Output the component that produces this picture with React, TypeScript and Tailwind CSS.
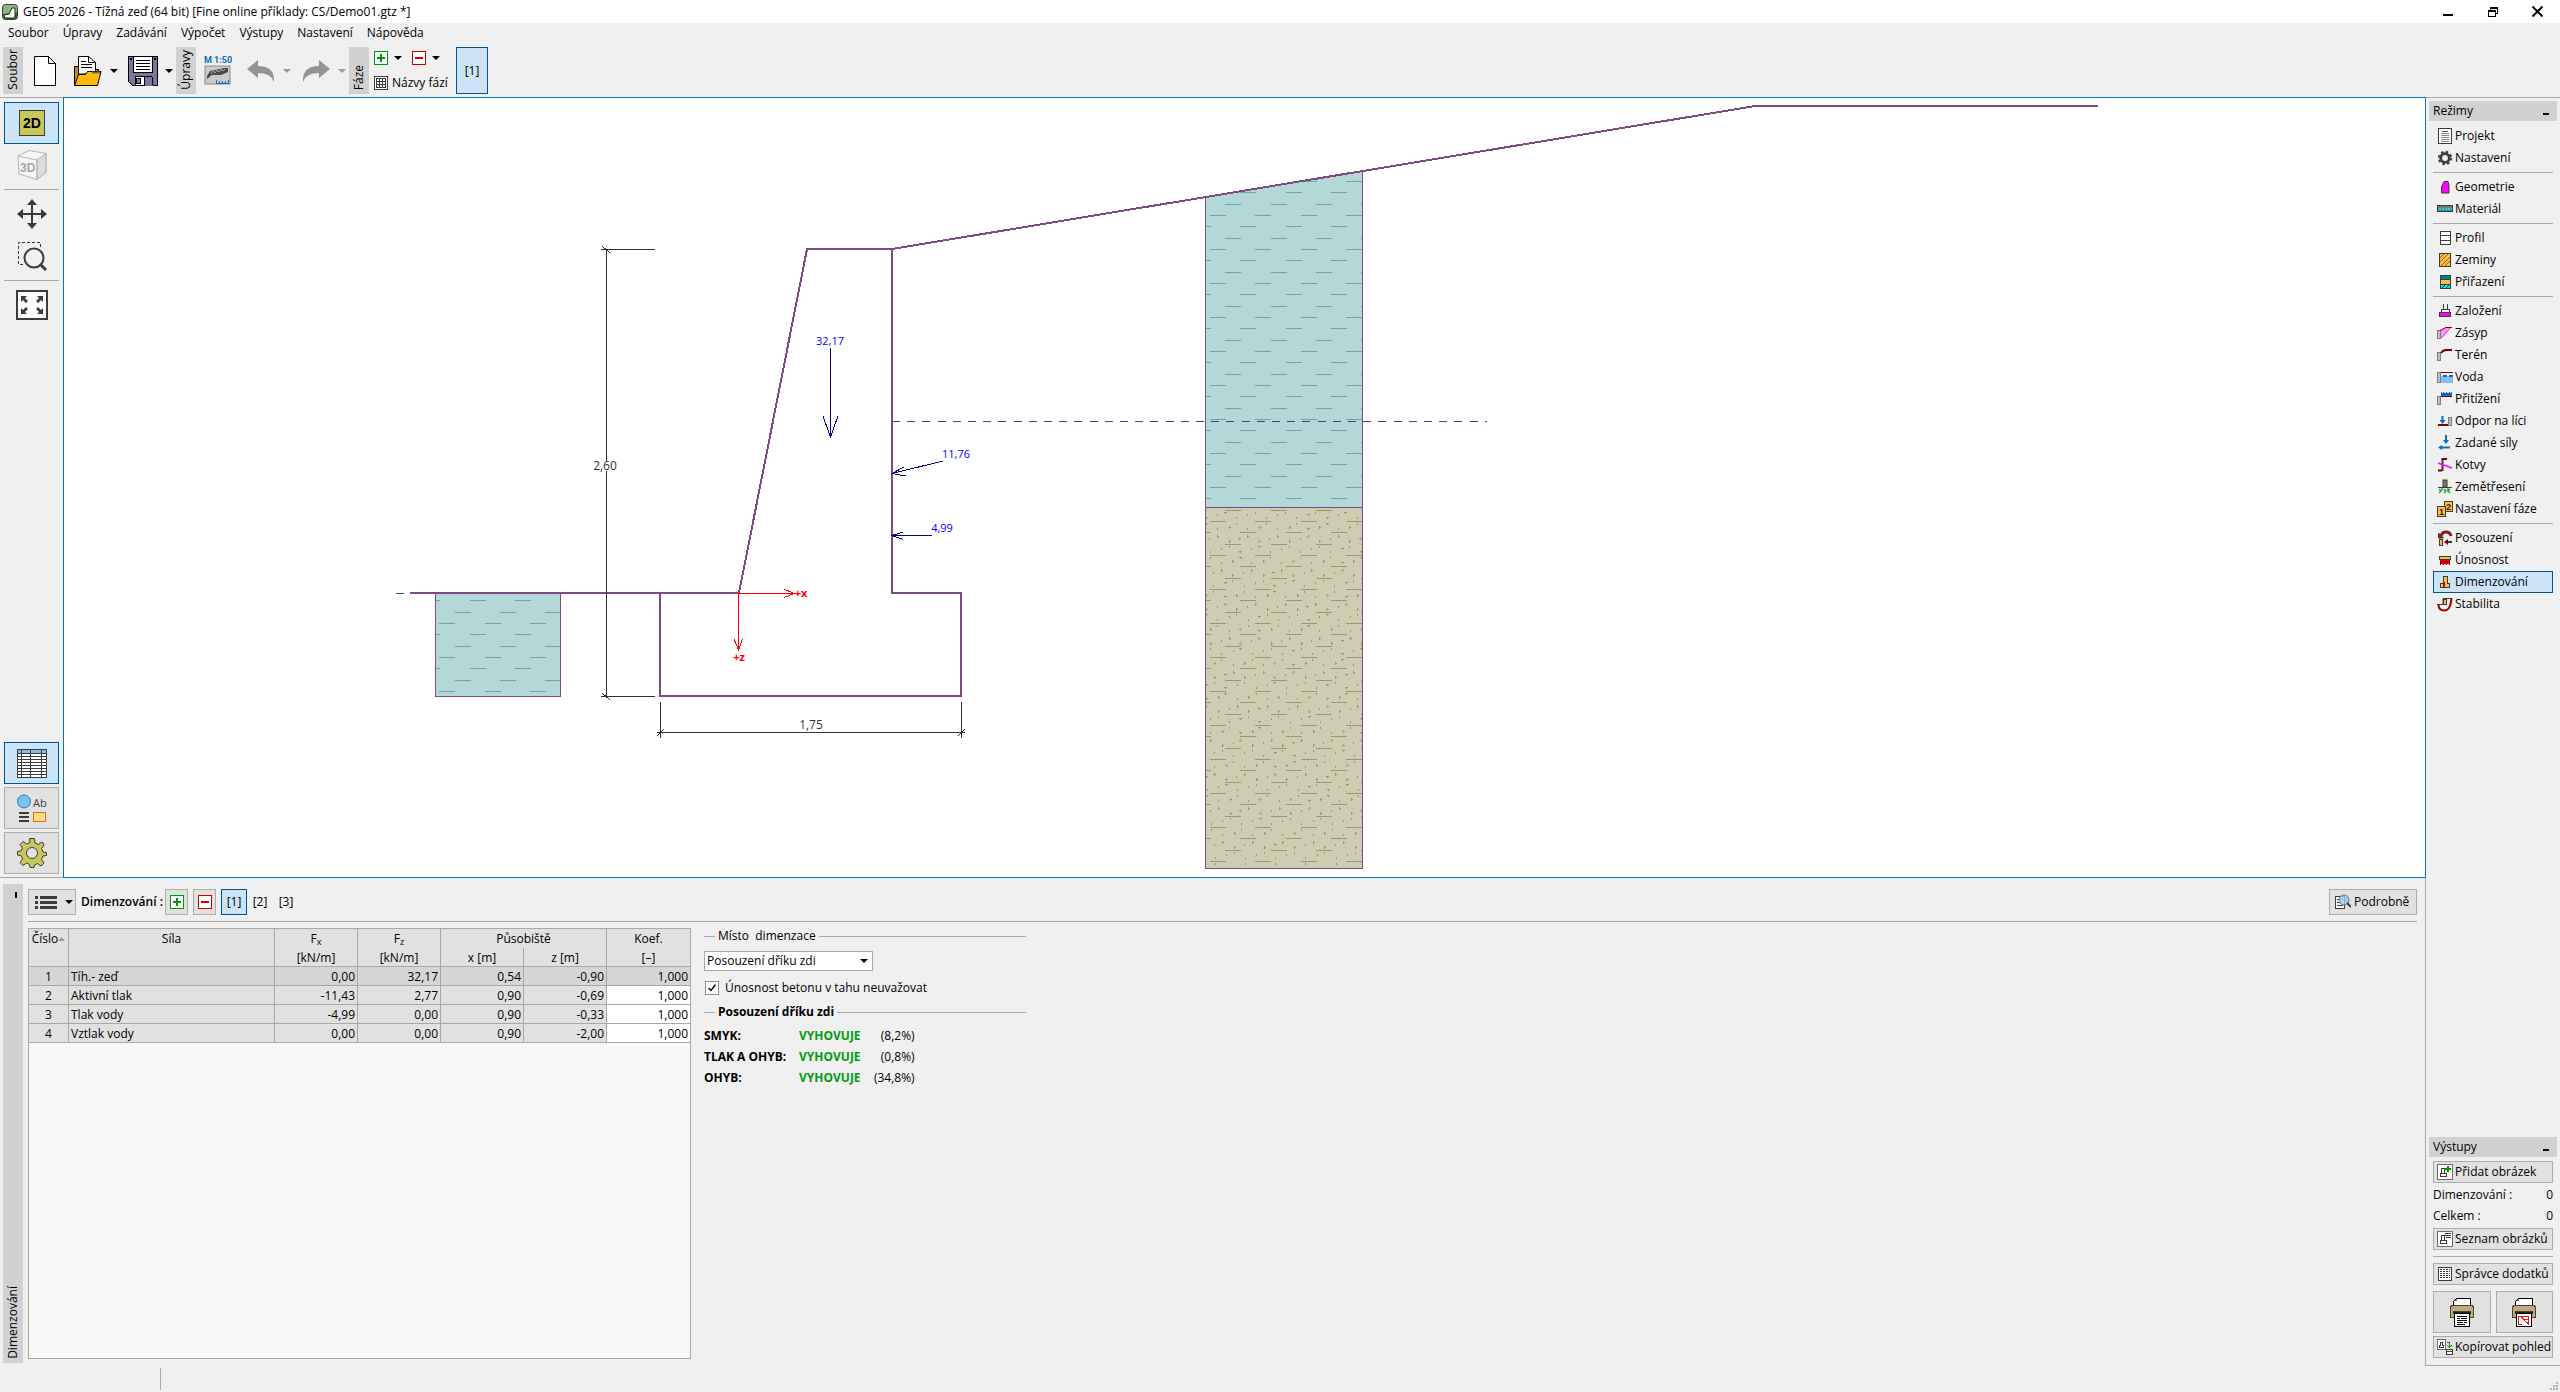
import type { ReactNode } from "react";

const BTN = "flex items-center border border-[#adadad] bg-[#e1e1e1]";
const SELECTED = "border border-[#005499] bg-[#cce4f7]";
const INK = "#3c3c3c";

function Svg({ w = 16, h = 16, children, smooth = false }: { w?: number; h?: number; children: ReactNode; smooth?: boolean }) {
  return (
    <svg
      width={w}
      height={h}
      viewBox={`0 0 ${w} ${h}`}
      fill="none"
      className="shrink-0"
      shapeRendering={smooth ? "auto" : "crispEdges"}
      aria-hidden="true"
    >
      {children}
    </svg>
  );
}

function Caret({ color = "#000" }: { color?: string }) {
  return (
    <Svg w={8} h={4} smooth>
      <path d="M0 0h8L4 4z" fill={color} />
    </Svg>
  );
}

function PlusIcon() {
  return (
    <Svg w={14} h={14}>
      <rect x="0.5" y="0.5" width="13" height="13" rx="1" fill="#fff" stroke="#00960a" />
      <path d="M6 3h2v3h3v2H8v3H6V8H3V6h3z" fill="#00960a" />
    </Svg>
  );
}

function MinusIcon() {
  return (
    <Svg w={14} h={14}>
      <rect x="0.5" y="0.5" width="13" height="13" rx="1" fill="#fff" stroke="#c80000" />
      <path d="M3 6h8v2H3z" fill="#c80000" />
    </Svg>
  );
}

/* ---------- title bar and menu ---------- */

function TitleBar() {
  return (
    <header className="flex h-[23px] shrink-0 items-center bg-white pl-0.5">
      <Svg smooth>
        <rect x="0.5" y="0.5" width="15" height="15" rx="3" fill="#3d6b35" stroke="#2c4a28" />
        <path d="M1 4q0-3 3-3h8q3 0 3 3v4L1 10z" fill="#8fb386" />
        <path d="M2 11l5-1 3-6h3v8q0 2-2 2H4q-2 0-2-3z" fill="#fff" stroke="#1d2b1b" />
      </Svg>
      <h1 className="ml-[5px] grow">GEO5 2026 - Tížná zeď (64 bit) [Fine online příklady: CS/Demo01.gtz *]</h1>
      <button type="button" aria-label="Minimalizovat" className="flex h-full w-[45px] items-center justify-center">
        <Svg w={10} h={10}>
          <path d="M0 7h10v2H0z" fill="#000" />
        </Svg>
      </button>
      <button type="button" aria-label="Obnovit" className="flex h-full w-[45px] items-center justify-center">
        <Svg w={10} h={10}>
          <path d="M2 0h8v2H2zM0 3h8v2H0zM2 0h1v3H2zM9 0h1v7H9zM8 6h2v1H8z" fill="#000" />
          <path d="M0.5 4.5h7v5h-7z" stroke="#000" />
        </Svg>
      </button>
      <button type="button" aria-label="Zavřít" className="flex h-full w-[45px] items-center justify-center">
        <Svg w={11} h={11} smooth>
          <path d="M0.5 0.5l10 10M10.5 0.5l-10 10" stroke="#000" strokeWidth="2" />
        </Svg>
      </button>
    </header>
  );
}

const MENU = ["Soubor", "Úpravy", "Zadávání", "Výpočet", "Výstupy", "Nastavení", "Nápověda"];

function MenuBar() {
  return (
    <nav className="flex h-5 shrink-0 items-center gap-3.5 pl-2">
      {MENU.map((m) => (
        <button key={m} type="button">
          {m}
        </button>
      ))}
    </nav>
  );
}

/* ---------- main toolbar ---------- */

function SideLabel({ children }: { children: ReactNode }) {
  return (
    <div className="flex w-5 shrink-0 items-end justify-center bg-[#d1d1d1] pb-1">
      <span className="rotate-180 leading-4 [writing-mode:vertical-rl]">{children}</span>
    </div>
  );
}

function ToolButton({ label, children }: { label: string; children: ReactNode }) {
  return (
    <button type="button" aria-label={label} className="flex w-[38px] items-center justify-center">
      {children}
    </button>
  );
}

function ArrowButton({ label, color }: { label: string; color?: string }) {
  return (
    <button type="button" aria-label={label} className="flex w-3.5 items-center justify-center">
      <Caret color={color} />
    </button>
  );
}

function GridIcon() {
  return (
    <Svg w={14} h={14}>
      <rect x="0.5" y="0.5" width="13" height="13" fill="#fff" stroke={INK} />
      <rect x="2.5" y="2.5" width="9" height="9" stroke={INK} />
      <path d="M3 5.5h8M3 8.5h8M5.5 3v8M8.5 3v8" stroke={INK} />
    </Svg>
  );
}

function Toolbar() {
  return (
    <div className="flex h-[54px] shrink-0 items-stretch pt-1 pb-[3px] pl-[3px]">
      <SideLabel>Soubor</SideLabel>
      <div className="ml-[3px] flex">
        <ToolButton label="Nový">
          <Svg w={22} h={30} smooth>
            <path d="M0.5 0.5h14l7 7v22h-21z" fill="#fff" stroke="#000" />
            <path d="M14.5 0.5v7h7" stroke="#000" />
          </Svg>
        </ToolButton>
      </div>
      <div className="ml-[5px] flex">
        <ToolButton label="Otevřít">
          <Svg w={28} h={30} smooth>
            <path d="M0.5 29V10.5h6l2 3h16v5" fill="#d18b00" stroke="#000" />
            <path d="M4.5 18V0.5h10l7 6V18z" fill="#fff" stroke="#000" />
            <path d="M14.5 0.5v6h7" stroke="#000" />
            <path d="M7 5.5h5M7 8.5h11M7 11.5h11" stroke="#000" />
            <path d="M0.5 29.5l4-11h7l2-3h13.5l-3.5 14z" fill="#ffb90a" stroke="#000" />
            <path d="M18 16.5h8" stroke="#667" strokeWidth="2" />
          </Svg>
        </ToolButton>
        <ArrowButton label="Otevřít nedávné" />
      </div>
      <div className="ml-[3px] flex">
        <ToolButton label="Uložit">
          <Svg w={30} h={30}>
            <path d="M0.5 0.5h29v29H4.5l-4-4z" fill="#7b7799" stroke="#000" />
            <rect x="5.5" y="0.5" width="19" height="16" fill="#fff" stroke="#000" />
            <path d="M8 4.5h14M8 7.5h14M8 10.5h14M8 13.5h14" stroke="#000" />
            <path d="M2 2h2v2H2zM26 2h2v2h-2z" fill="#000" />
            <rect x="7.5" y="20.5" width="16" height="9" fill="#fff" stroke="#000" />
            <rect x="8.5" y="22.5" width="4" height="5" fill="#7b7799" stroke="#000" />
            <path d="M17 21h8v9h-8z" fill="#7b7799" />
            <path d="M24.5 21v8M16.5 21v8" stroke="#000" />
          </Svg>
        </ToolButton>
        <ArrowButton label="Uložit jako" />
      </div>
      <SideLabel>Úpravy</SideLabel>
      <div className="mx-[3px] flex">
        <ToolButton label="Měřítko">
          <Svg w={28} h={29} smooth>
            <text x="0" y="7" fontSize="9" fontWeight="700" fill="#0a6ebe" fontFamily="Roboto, sans-serif">
              M 1:50
            </text>
            <rect x="1" y="10" width="25" height="18" fill="#cbcbcb" stroke="#8a8a8a" />
            <path d="M3 20l3-5 14-3h4v4l-7 3H8l-5 4z" fill="#4c4c4c" />
            <path d="M7 18l2-3 2 2 2-3 2 2 2-3 2 2 2-2" stroke="#a8a8a8" />
            <path d="M12.5 24v3.5h12V24M15.5 25v2M18.500 25v2M21.500 25v2" stroke="#0a6ebe" />
          </Svg>
        </ToolButton>
      </div>
      <div className="ml-0.5 flex">
        <ToolButton label="Zpět">
          <Svg w={28} h={22} smooth>
            <path d="M0 9L11 0v6q17 0 16 16q-3-9-16-9v5z" fill="#949494" />
          </Svg>
        </ToolButton>
        <ArrowButton label="Historie zpět" color="#999" />
      </div>
      <div className="ml-[3px] flex">
        <ToolButton label="Znovu">
          <Svg w={28} h={22} smooth>
            <path d="M28 9L17 0v6q-17 0-16 16q3-9 16-9v5z" fill="#949494" />
          </Svg>
        </ToolButton>
        <ArrowButton label="Historie znovu" color="#999" />
      </div>
      <SideLabel>Fáze</SideLabel>
      <div className="ml-[5px] flex w-[82px] flex-col justify-between py-1">
        <div className="flex items-center">
          <button type="button" aria-label="Přidat fázi">
            <PlusIcon />
          </button>
          <button type="button" aria-label="Přidat fázi – možnosti" className="ml-1.5">
            <Caret />
          </button>
          <button type="button" aria-label="Odebrat fázi" className="ml-2.5">
            <MinusIcon />
          </button>
          <button type="button" aria-label="Odebrat fázi – možnosti" className="ml-1.5">
            <Caret />
          </button>
        </div>
        <button type="button" className="flex h-3.5 items-center gap-1 whitespace-nowrap">
          <GridIcon />
          Názvy fází
        </button>
      </div>
      <button type="button" className={`w-8 ${SELECTED}`}>
        [1]
      </button>
    </div>
  );
}

/* ---------- left view bar ---------- */

function ViewButton({ label, look = "plain", children }: { label: string; look?: "plain" | "raised" | "selected"; children: ReactNode }) {
  const style = look === "selected" ? SELECTED : look === "raised" ? "border border-[#adadad] bg-[#e1e1e1]" : "";
  return (
    <button type="button" aria-label={label} className={`flex h-[42px] w-full shrink-0 items-center justify-center ${style}`}>
      {children}
    </button>
  );
}

function ViewBar() {
  return (
    <aside className="flex w-[63px] shrink-0 flex-col border-y border-[#a8a8a8] px-1 pt-1 pb-[3px]">
      <ViewButton label="2D" look="selected">
        <Svg w={26} h={26}>
          <rect x="0.5" y="0.5" width="25" height="25" fill="#c8c85a" stroke={INK} />
          <text x="13" y="18" fontSize="14" fontWeight="700" textAnchor="middle" fill="#000" fontFamily="Liberation Sans, sans-serif">
            2D
          </text>
        </Svg>
      </ViewButton>
      <ViewButton label="3D">
        <Svg w={30} h={30} smooth>
          <path d="M1 6L12 0.5l17 3v19L20 29.5 2 24z" fill="#f6f6f6" stroke="#b4b4b4" />
          <path d="M20 10l9-6.5v19l-9 7z" fill="#dcdcdc" stroke="#b4b4b4" />
          <path d="M1 6l19 4v19" stroke="#b4b4b4" />
          <text x="3" y="22" fontSize="12" fontWeight="700" fill="#a4a4a4" fontFamily="Liberation Sans, sans-serif">
            3D
          </text>
        </Svg>
      </ViewButton>
      <hr className="my-[3px] border-[#a8a8a8]" />
      <ViewButton label="Posun">
        <Svg w={30} h={30} smooth>
          <path d="M15 4v22M4 15h22" stroke={INK} strokeWidth="2" />
          <path d="M15 0l5 6H10zM15 30l5-6H10zM0 15l6-5v10zM30 15l-6-5v10z" fill={INK} />
        </Svg>
      </ViewButton>
      <ViewButton label="Výřez">
        <Svg w={30} h={30} smooth>
          <path d="M6 23.5H1.5v-22h22V7" stroke={INK} strokeDasharray="3 2" />
          <circle cx="17" cy="17" r="9.5" stroke={INK} strokeWidth="2" />
          <path d="M23 23l6 6" stroke={INK} strokeWidth="3" />
        </Svg>
      </ViewButton>
      <hr className="my-[3px] border-[#a8a8a8]" />
      <ViewButton label="Zobrazit vše">
        <Svg w={32} h={30} smooth>
          <rect x="1" y="1" width="30" height="28" stroke={INK} strokeWidth="2" fill="#fafafa" />
          <path d="M5 12V6h6L9 8l3 3-2 2-3-3zM27 12V6h-6l2 2-3 3 2 2 3-3zM5 18v6h6l-2-2 3-3-2-2-3 3zM27 18v6h-6l2-2-3-3 2-2 3 3z" fill={INK} />
        </Svg>
      </ViewButton>
      <div className="mt-auto flex flex-col gap-[3px]">
        <ViewButton label="Tabulka" look="selected">
          <Svg w={30} h={29}>
            <rect x="0.5" y="0.5" width="29" height="28" fill="#fff" stroke={INK} />
            <path d="M1 1h28v3H1z" fill="#7fbfee" />
            <path d="M0 4.5h30M0 7.5h30M0 10.5h30M0 13.5h30M0 16.5h30M0 19.5h30M0 22.5h30M0 25.5h30M4.5 0v29M13.5 0v29M24.5 0v29" stroke={INK} />
          </Svg>
        </ViewButton>
        <ViewButton label="Kreslení" look="raised">
          <Svg w={30} h={29} smooth>
            <circle cx="7" cy="7.5" r="6.5" fill="#7fbfee" stroke="#1f7cc4" />
            <text x="16" y="13" fontSize="11" fill={INK} fontFamily="Open Sans, sans-serif">
              Ab
            </text>
            <path d="M2 19h10M2 23h10M2 27h10" stroke={INK} strokeWidth="2" />
            <rect x="16.5" y="18.5" width="12" height="9" fill="#fadc8c" stroke="#e07000" />
          </Svg>
        </ViewButton>
        <ViewButton label="Nastavení zobrazení" look="raised">
          <Svg w={30} h={30} smooth>
            <path
              d="M12.5 0.5h5l.5 4.500 3.500 1.500 3.500-2.500 2 2 -.5 2-2 2.500 1.500 3.500 3.500 .5v3l-3.500 .5-1.500 3.500 2.500 3.500-3 3-3.500-2.500-3 1.500-.5 2.500h-4l-.5-3-3-1.500-3.500 2.500-3-3 2.500-3.500-1.500-3.500-3.500-.5v-3.500l3.500-.5 1.500-3-2.500-3.500 3-3 3.500 2.500 3.500-1.500z"
              fill="#c8c85a"
              stroke={INK}
              strokeLinejoin="round"
            />
            <circle cx="15" cy="15" r="5.5" fill="#e1e1e1" stroke={INK} />
          </Svg>
        </ViewButton>
      </div>
    </aside>
  );
}

/* ---------- drawing ---------- */

const OUTLINE = "#7f4a7f";

/** Rows of short clay dashes, every row shifted against the one above. */
function clayPath(x1: number, x2: number, y1: number, y2: number) {
  const step = 34 / 3;
  const period = 136 / 3;
  const shift = [30, 15, 0];
  let d = "";
  for (let j = Math.ceil((y1 - 215) / step); 215 + j * step < y2; j++) {
    const y = Math.round(215 + j * step) + 0.5;
    const off = 1180 + shift[((j % 3) + 3) % 3];
    for (let k = Math.floor((x1 - 16 - off) / period); off + k * period < x2; k++) {
      const a = Math.max(x1, Math.round(off + k * period));
      const b = Math.min(x2, Math.round(off + k * period) + 16);
      if (b > a) d += `M${a} ${y}H${b}`;
    }
  }
  return d;
}

const GRAINS: [number, number, "v" | "r"][] = [
  [0, 0, "v"],
  [57, 9, "v"],
  [57, 27, "v"],
  [35, 35, "r"],
  [0, 42, "v"],
  [0, 62, "r"],
  [67, 70, "v"],
  [35, 77, "r"],
  [35, 96, "v"],
];
const WIDE = [49, 106, 151, 209, 253, 310, 355, 412, 457, 469, 514];

/** Sand grains between the dashes; the lattice drifts sideways from band to band. */
function sandPath() {
  const period = 90.67;
  let d = "";
  for (let k = -1; k < 12; k++) {
    for (const [gx, gy, kind] of GRAINS) {
      const y = 490 + Math.floor((77 + 102 * k + gy) / 3);
      if (y < 508 || y > 865) continue;
      let start = (82 + 11.8 * k + gx) % period;
      if (start < 47) start += period;
      for (let gridX = start; gridX < 516; gridX += period) {
        const x = 1190 + Math.floor(gridX / 3);
        const wide = WIDE.some((w) => Math.abs(w - gridX) < 3);
        if (kind === "r" && wide) d += `M${x} ${y - 1}h1v1h-1zM${x} ${y + 1}h1v1h-1zM${x - 1} ${y}h1v1h-1zM${x + 1} ${y}h1v1h-1z`;
        else if (kind === "r") d += `M${x} ${y - 1}h1v3h-1zM${x + 1} ${y}h1v1h-1z`;
        else if (wide) d += `M${x - 1} ${y - 1}h3v1h-3zM${x} ${y}h1v1h-1z`;
        else d += `M${x} ${y - 1}h1v2h-1z`;
      }
    }
  }
  return d;
}

function Drawing() {
  return (
    <svg
      viewBox="64 98 2361 779"
      preserveAspectRatio="xMidYMid meet"
      className="block h-full w-full"
      fill="none"
      fontFamily="Open Sans, sans-serif"
      fontSize="12"
      role="img"
      aria-label="Řez tížnou zdí se silami"
    >
      <defs>
        <clipPath id="upper-soil">
          <path d="M1205 197L1363 171V507H1205z" />
        </clipPath>
      </defs>
      <g shapeRendering="crispEdges">
        <rect x="435" y="593" width="126" height="103" fill="#b4d7d7" />
        <path d={clayPath(436, 560, 597, 696)} stroke="#64aaaa" />
        <path d="M435.5 593V696.5H560.5V593" stroke={OUTLINE} />
        <path d="M1205 197L1363 171V507H1205z" fill="#b4d7d7" />
        <path d={clayPath(1206, 1362, 170, 507)} stroke="#64aaaa" clipPath="url(#upper-soil)" />
        <rect x="1205" y="507" width="158" height="362" fill="#cdcdb4" />
        <path d={clayPath(1206, 1362, 508, 868)} stroke="#9b9b5f" />
        <path d={sandPath()} fill="#9b9b5f" />
        <path d="M1205.5 197V868.5H1362.5V171M1205 507.5H1363" stroke={OUTLINE} />
        <path d="M892 421.5H1487" stroke="#3c3c9b" strokeDasharray="8 7.2" />
        <path d="M396 593.5H404" stroke="#3c3c9b" />
        <path d="M410 593H739L807 249H892V593H961V696H660V593" stroke={OUTLINE} strokeWidth="2" />
        <path d="M892 249L1755 106H2098" stroke={OUTLINE} strokeWidth="2" />

        <path d="M601 249.5H655M601 696.5H655M606.5 249V461M606.5 471V696" stroke="#323232" />
        <path d="M602 246l8 7M602 693l8 7" stroke="#323232" />
        <path d="M660.5 702V738M961.5 702V738M657 732.5H965" stroke="#323232" />
        <path d="M657 736l7-7M958 736l7-7" stroke="#323232" />

        <path d="M830.5 348V437M823 416l7.5 21 7.5-21" stroke="#000082" />
        <path d="M943 461L892 473.5M904 467l-12 6.5 14 2.5" stroke="#000082" />
        <path d="M932 535.5H892M903 532l-11 3.5 11 4" stroke="#000082" />

        <path d="M738.5 593V650M734 639l4.5 11 4-11M738 593.5H798M784 589l10 4.500-10 4" stroke="#f00" />
      </g>
      <g textAnchor="middle">
        <text x="605" y="470" fill="#323232">2,60</text>
        <text x="811" y="729" fill="#323232">1,75</text>
        <g fill="#00f" fontSize="11">
          <text x="830" y="345">32,17</text>
          <text x="956" y="458">11,76</text>
          <text x="942" y="532">4,99</text>
        </g>
        <g fill="#f00" fontSize="11" fontWeight="700">
          <text x="801" y="597">+x</text>
          <text x="739" y="661">+z</text>
        </g>
      </g>
    </svg>
  );
}

/* ---------- bottom panel ---------- */

const FORCES = [
  ["Tíh.- zeď", "0,00", "32,17", "0,54", "-0,90", "1,000"],
  ["Aktivní tlak", "-11,43", "2,77", "0,90", "-0,69", "1,000"],
  ["Tlak vody", "-4,99", "0,00", "0,90", "-0,33", "1,000"],
  ["Vztlak vody", "0,00", "0,00", "0,90", "-2,00", "1,000"],
];

const LINE = "border-[#a8a8a8]";
const TH = "h-[19px] p-0 text-center align-middle font-normal leading-4";
const TD = "h-[19px] border-b border-[#a8a8a8] p-0 pt-0.5";

function ForceTable() {
  return (
    <div className={`w-[663px] border bg-[#f8f8f8] ${LINE}`}>
      <table className="w-full table-fixed border-separate border-spacing-0 leading-4">
        <colgroup>
          <col className="w-10" />
          <col className="w-[206px]" />
          <col />
          <col />
          <col />
          <col />
          <col />
        </colgroup>
        <thead className="bg-[#e1e1e1]">
          <tr>
            <th rowSpan={2} className={`border-r border-b p-0 pt-0.5 align-top font-normal ${LINE}`}>
              <span className="flex items-center justify-center">
                Číslo
                <Svg w={7} h={4} smooth>
                  <path d="M0 4l3.5-4L7 4z" fill="#999" />
                </Svg>
              </span>
            </th>
            <th rowSpan={2} className={`border-r border-b p-0 pt-0.5 align-top font-normal ${LINE}`}>
              Síla
            </th>
            <th className={`${TH} border-r ${LINE}`}>
              F<sub className="text-[9px] leading-none">x</sub>
            </th>
            <th className={`${TH} border-r ${LINE}`}>
              F<sub className="text-[9px] leading-none">z</sub>
            </th>
            <th colSpan={2} className={`${TH} border-r ${LINE}`}>
              Působiště
            </th>
            <th className={TH}>Koef.</th>
          </tr>
          <tr>
            {["[kN/m]", "[kN/m]", "x [m]", "z [m]"].map((t, i) => (
              <th key={i} className={`${TH} border-r border-b pt-0.5 ${LINE}`}>
                {t}
              </th>
            ))}
            <th className={`${TH} border-b pt-0.5 ${LINE}`}>[–]</th>
          </tr>
        </thead>
        <tbody>
          {FORCES.map(([name, ...nums], r) => (
            <tr key={name} className={r === 0 ? "bg-[#d6d6d6]" : "bg-[#e1e1e1]"}>
              <td className={`${TD} border-r text-center`}>{r + 1}</td>
              <td className={`${TD} border-r pl-0.5`}>{name}</td>
              {nums.slice(0, 4).map((n, i) => (
                <td key={i} className={`${TD} border-r pr-0.5 text-right`}>
                  {n}
                </td>
              ))}
              {r === 0 ? (
                <td className={`${TD} pr-0.5 text-right`}>{nums[4]}</td>
              ) : (
                <td className={`border-b bg-white p-0 ${LINE}`}>
                  <input defaultValue={nums[4]} aria-label={`Koef. ${name}`} className="block h-[18px] w-full bg-transparent pt-px pr-0.5 text-right" />
                </td>
              )}
            </tr>
          ))}
        </tbody>
      </table>
    </div>
  );
}

function GroupTitle({ children, bold = false }: { children: ReactNode; bold?: boolean }) {
  return (
    <h2 className={`flex items-center gap-[3px] leading-4 whitespace-pre ${bold ? "font-bold" : ""}`}>
      <span className="h-px w-[11px] bg-[#a8a8a8]" />
      {children}
      <span className="h-px grow bg-[#a8a8a8]" />
    </h2>
  );
}

const CHECKS = [
  ["SMYK:", "(8,2%)"],
  ["TLAK A OHYB:", "(0,8%)"],
  ["OHYB:", "(34,8%)"],
];

function DesignForm() {
  return (
    <section className="w-[322px] leading-4">
      <GroupTitle>{"Místo  dimenzace"}</GroupTitle>
      <div className="relative mt-[7px] h-5 w-[169px]">
        <select aria-label="Místo dimenzace" className="h-full w-full appearance-none border border-[#a8a8a8] bg-white pl-0.5 leading-4">
          <option>Posouzení dříku zdi</option>
        </select>
        <span className="pointer-events-none absolute top-2 right-[5px] flex">
          <Caret />
        </span>
      </div>
      <label className="mt-[9px] flex items-center">
        <span className="relative ml-px h-3.5 w-3.5">
          <input type="checkbox" defaultChecked className="block h-3.5 w-3.5 appearance-none border border-[#8f8f8f] bg-white" />
          <span className="pointer-events-none absolute top-[3px] left-[3px]">
            <Svg w={8} h={8} smooth>
              <path d="M0.5 4L3 6.5l4.5-6" stroke="#000" strokeWidth="1.3" />
            </Svg>
          </span>
        </span>
        <span className="ml-1.5">Únosnost betonu v tahu neuvažovat</span>
      </label>
      <div className="mt-2">
        <GroupTitle bold>Posouzení dříku zdi</GroupTitle>
      </div>
      <dl className="mt-[5px] leading-[21px]">
        {CHECKS.map(([k, v]) => (
          <div key={k} className="flex">
            <dt className="w-[95px] font-bold">{k}</dt>
            <dd className="font-bold text-[#009b0f]">VYHOVUJE</dd>
            <dd className="w-[54px] text-right">{v}</dd>
          </div>
        ))}
      </dl>
    </section>
  );
}

function BottomPanel() {
  return (
    <section className="flex h-[488px] shrink-0 border-r border-[#a8a8a8] pt-1.5 pr-2 pb-[3px] pl-[3px]">
      <div className="flex w-5 shrink-0 flex-col items-center justify-between bg-[#d1d1d1] pt-2 pb-1">
        <button type="button" aria-label="Sbalit" className="ml-1.5 h-1.5 w-0.5 bg-black" />
        <span className="rotate-180 leading-4 [writing-mode:vertical-rl]">Dimenzování</span>
      </div>
      <div className="ml-[5px] flex min-w-0 grow flex-col">
        <div className="mt-[5px] flex h-[26px] items-stretch">
          <button type="button" aria-label="Seznam" className={`${BTN} w-12 justify-center gap-2 pl-1`}>
            <Svg w={22} h={13}>
              <path d="M0 0h3v3H0zM5 0h17v3H5zM0 5h3v3H0zM5 5h17v3H5zM0 10h3v3H0zM5 10h17v3H5z" fill={INK} />
            </Svg>
            <Caret />
          </button>
          <span className="ml-[5px] flex w-[84px] items-center font-semibold whitespace-nowrap">Dimenzování :</span>
          <button type="button" aria-label="Přidat" className={`${BTN} w-[23px] justify-center`}>
            <PlusIcon />
          </button>
          <button type="button" aria-label="Odebrat" className={`${BTN} ml-[5px] w-[23px] justify-center`}>
            <MinusIcon />
          </button>
          <button type="button" className={`ml-[5px] w-[26px] ${SELECTED}`}>
            [1]
          </button>
          <button type="button" className="w-[26px]">
            [2]
          </button>
          <button type="button" className="w-[26px]">
            [3]
          </button>
          <button type="button" className={`${BTN} ml-auto w-[88px] gap-[3px] pl-[5px]`}>
            <Svg smooth>
              <rect x="0.5" y="2.5" width="9" height="12" fill="#fff" stroke={INK} />
              <path d="M2 5.5h6M2 8.5h4M2 11.5h6" stroke={INK} />
              <circle cx="9" cy="6" r="5" fill="#9cc9ea" fillOpacity=".8" stroke="#5e7c95" />
              <path d="M12 9l4 4" stroke={INK} strokeWidth="2" />
            </Svg>
            Podrobně
          </button>
        </div>
        <hr className="mt-1.5 border-[#a8a8a8]" />
        <div className="mt-1.5 mb-1 flex grow items-stretch gap-[13px]">
          <ForceTable />
          <DesignForm />
        </div>
      </div>
    </section>
  );
}

/* ---------- right panel ---------- */

const WALL = <rect x="0.5" y="5.5" width="3" height="8" fill="#bebebe" stroke="#7d7d7d" />;

const ICONS: Record<string, ReactNode> = {
  Projekt: (
    <>
      <rect x="1.5" y="0.5" width="13" height="15" fill="#fff" stroke={INK} />
      <path d="M5 3.5h6" stroke="#555" />
      <path d="M4 5.5h8M4 7.5h8M4 9.5h8M4 11.5h8M4 13.5h8" stroke="#8a8a8a" />
    </>
  ),
  Nastavení: (
    <g shapeRendering="auto">
      <circle cx="8" cy="8" r="4.3" stroke={INK} strokeWidth="2.8" />
      <circle cx="8" cy="8" r="6.2" stroke={INK} strokeWidth="2" strokeDasharray="2.5 2.37" />
    </g>
  ),
  Geometrie: <path d="M4.5 14V8L7 2.5h4l1 3.5V14z" fill="#ff00ff" stroke={INK} shapeRendering="auto" />,
  Materiál: (
    <>
      <rect x="0.5" y="4.5" width="15" height="6" fill="#787878" stroke={INK} />
      <path d="M2 8h13" stroke="#00e6f0" strokeWidth="2" strokeDasharray="2 1" />
    </>
  ),
  Profil: (
    <>
      <rect x="3.5" y="1.5" width="10" height="13" fill="#fff" stroke={INK} />
      <path d="M4 5.5h10M4 10.5h10" stroke={INK} />
    </>
  ),
  Zeminy: (
    <>
      <rect x="2.5" y="1.5" width="11" height="13" fill="#ffbe3c" stroke={INK} />
      <path d="M3 6l4-4M3 10l8-8M4 14l9-9M8 14l5-5" stroke="#a05a14" shapeRendering="auto" />
    </>
  ),
  Přiřazení: (
    <>
      <rect x="3.5" y="1.5" width="10" height="13" fill="#ffbe3c" stroke={INK} />
      <path d="M4 2h9v3H4z" fill="#008282" />
      <path d="M4 11h9v3H4z" fill="#00e6f0" />
      <path d="M3 5.5h10M3 10.5h10M5 14l3-3M9 14l3-3" stroke={INK} />
    </>
  ),
  Založení: (
    <>
      <path d="M6.5 1v5M10.5 1v5" stroke={INK} />
      <rect x="4.5" y="6.5" width="8" height="3" fill="#fff" stroke={INK} />
      <rect x="2.5" y="9.5" width="11" height="4" fill="#ff00ff" stroke={INK} />
    </>
  ),
  Zásyp: (
    <g shapeRendering="auto">
      {WALL}
      <path d="M4 13V5l5-3h5z" fill="#ff96ff" />
      <path d="M4.5 13l9.5-11" stroke="#ff00ff" />
      <path d="M3 5.500l6-3h6" stroke="#820000" />
    </g>
  ),
  Terén: (
    <g shapeRendering="auto">
      {WALL}
      <path d="M4 6q2-3 5-3h6" stroke="#820000" strokeWidth="2" />
    </g>
  ),
  Voda: (
    <>
      <rect x="0.5" y="3.5" width="3" height="10" fill="#bebebe" stroke="#7d7d7d" />
      <path d="M4 3.5h12" stroke="#820000" />
      <path d="M4 7h12v7H4z" fill="#82bef0" />
      <path d="M6 7h10" stroke="#0a6ebe" strokeWidth="2" strokeDasharray="4 2" />
    </>
  ),
  Přitížení: (
    <>
      {WALL}
      <path d="M4 5V1h1v1h1V1h1v1h2V1h1v1h2V1h1v1h1V1h1v4z" fill="#0a6ebe" />
      <path d="M4 5.500h11" stroke="#820000" />
    </>
  ),
  "Odpor na líci": (
    <g shapeRendering="auto">
      <path d="M5.5 3v5" stroke="#0a6ebe" strokeWidth="2" />
      <path d="M2.500 7h6l-3 4z" fill="#0a6ebe" />
      <path d="M1 12h10" stroke="#820000" strokeWidth="2" />
      <rect x="11.5" y="4.5" width="3" height="8" fill="#bebebe" stroke="#7d7d7d" />
    </g>
  ),
  "Zadané síly": (
    <g shapeRendering="auto">
      <path d="M9 0v6M13 12.5H5" stroke="#0a6ebe" strokeWidth="2" />
      <path d="M6 5h6L9 9zM5 10v5l-4-2.500z" fill="#0a6ebe" />
    </g>
  ),
  Kotvy: (
    <g shapeRendering="auto">
      <path d="M6 2H5.5v12" stroke={INK} strokeWidth="2" />
      <path d="M5 2h5M1 13.5h4" stroke="#820000" strokeWidth="2" />
      <path d="M1 6l14 5" stroke="#ff00ff" strokeWidth="1.5" />
    </g>
  ),
  Zemětřesení: (
    <g shapeRendering="auto">
      <rect x="6" y="1" width="4" height="7" fill="#787878" stroke={INK} />
      <path d="M1 8.5h14M5 8v4M11 8v4" stroke={INK} />
      <path d="M2 10l2 2-2 2M7 10l2 2-2 2M13 10l-2 2 2 2" stroke="#00aa1e" strokeWidth="1.3" />
    </g>
  ),
  "Nastavení fáze": (
    <>
      <rect x="7.5" y="0.5" width="8" height="10" fill="#ffbe3c" stroke={INK} />
      <rect x="0.5" y="5.5" width="8" height="10" fill="#ffbe3c" stroke={INK} />
      <g fontSize="9" fontWeight="700" fill="#222" fontFamily="Liberation Sans, sans-serif">
        <text x="9" y="9">2</text>
        <text x="2" y="14">1</text>
      </g>
    </>
  ),
  Posouzení: (
    <g shapeRendering="auto">
      <path d="M4 6q1-4 5-4 4 0 5 4" stroke={INK} strokeWidth="3" />
      <path d="M4 6q1-4 5-4 4 0 5 4" stroke="#c80000" strokeWidth="1.5" />
      <path d="M1.500 3v5h5z" fill="#c80000" stroke={INK} />
      <rect x="2.5" y="9.5" width="3" height="6" fill="#ffbe3c" stroke={INK} />
      <path d="M15 12h-5" stroke={INK} strokeWidth="2" />
      <path d="M7 12l4-3v6z" fill="#820000" />
    </g>
  ),
  Únosnost: (
    <>
      <path d="M3 8h10v5h-1v-1h-2v1H9v-1H7v1H6v-1H4v1H3z" fill="#c80000" />
      <rect x="2.5" y="4.5" width="11" height="3" fill="#ffbe3c" stroke={INK} />
    </>
  ),
  Dimenzování: (
    <>
      <path d="M6.5 2.5h4v7h2v4h-9v-4h3z" fill="#ffbe3c" stroke={INK} />
      <path d="M6 8h2v5H6z" fill="#d20000" />
    </>
  ),
  Stabilita: (
    <g shapeRendering="auto">
      <path d="M0 8.5h6v-6h9" stroke={INK} />
      <path d="M1.5 8.5q0 6 6 6t7-12" stroke="#a00000" strokeWidth="2" />
      <rect x="6.5" y="3.5" width="3" height="5" fill="#ffbe3c" stroke={INK} />
    </g>
  ),
};

const MODES = [
  ["Projekt", "Nastavení"],
  ["Geometrie", "Materiál"],
  ["Profil", "Zeminy", "Přiřazení"],
  ["Založení", "Zásyp", "Terén", "Voda", "Přitížení", "Odpor na líci", "Zadané síly", "Kotvy", "Zemětřesení", "Nastavení fáze"],
  ["Posouzení", "Únosnost", "Dimenzování", "Stabilita"],
];

function PanelHeader({ children }: { children: ReactNode }) {
  return (
    <div className="flex h-5 items-center justify-between bg-[#d1d1d1] pr-2 pl-1">
      <h2>{children}</h2>
      <button type="button" aria-label={`Sbalit ${children}`} className="mt-1.5 h-0.5 w-1.5 bg-black" />
    </div>
  );
}

function WallSketch() {
  return <path d="M3.5 12.5v-3h1v-5h3v5h2v3zM4 9.5h4" stroke={INK} />;
}

function PrinterIcon({ children }: { children: ReactNode }) {
  return (
    <Svg w={24} h={29}>
      <path d="M3.5 9V3.5l3-3h14V9" fill="#fff" stroke="#000" />
      <path d="M4 3h3V1z" fill="#777" />
      <path d="M0.5 8.5l2-1h19l2 1v11h-23z" fill="#beaa82" stroke="#4a4030" />
      <path d="M2 19h20M3 13.5h18" stroke="#4a4030" />
      <path d="M3 14h18v2H3z" fill="#222" />
      <rect x="4.5" y="15.5" width="15" height="13" fill="#fff" stroke="#000" />
      {children}
    </Svg>
  );
}

function RightPanel() {
  return (
    <aside className="mb-[26px] flex w-[134px] shrink-0 flex-col border-y border-[#a8a8a8] px-[3px] pt-[3px] pb-[7px]">
      <PanelHeader>Režimy</PanelHeader>
      <nav className="px-1 pt-1">
        {MODES.map((group, g) => (
          <div key={g}>
            {g > 0 && <hr className="my-[3px] border-[#a8a8a8]" />}
            {group.map((m) => (
              <button
                key={m}
                type="button"
                className={`flex h-[22px] w-full items-center gap-0.5 border pl-[3px] ${
                  m === "Dimenzování" ? "border-[#005499] bg-[#cce4f7]" : "border-transparent"
                }`}
              >
                <Svg>{ICONS[m]}</Svg>
                {m}
              </button>
            ))}
          </div>
        ))}
      </nav>
      <div className="mt-auto">
        <PanelHeader>Výstupy</PanelHeader>
        <div className="flex flex-col px-1 pt-1">
          <button type="button" className={`${BTN} h-[22px] gap-0.5 pl-[3px]`}>
            <Svg>
              <rect x="0.5" y="0.5" width="15" height="15" fill="#fff" stroke="#6e6e6e" />
              <WallSketch />
              <path d="M10 2h2v2h2v2h-2v2h-2V6H8V4h2z" fill="#009600" />
            </Svg>
            Přidat obrázek
          </button>
          <p className="mt-px flex h-[21px] items-center justify-between">
            <span>Dimenzování :</span>
            <span>0</span>
          </p>
          <p className="mb-px flex h-[21px] items-center justify-between">
            <span>Celkem :</span>
            <span>0</span>
          </p>
          <button type="button" className={`${BTN} mt-px h-[22px] gap-0.5 pl-[3px]`}>
            <Svg>
              <rect x="0.5" y="0.5" width="15" height="15" fill="#fff" stroke="#6e6e6e" />
              <WallSketch />
              <path d="M8 2.5h6M8 4.5h6M9 6.5h5" stroke={INK} />
            </Svg>
            Seznam obrázků
          </button>
          <hr className="my-1.5 border-[#a8a8a8]" />
          <button type="button" className={`${BTN} h-[22px] gap-0.5 pl-[3px]`}>
            <Svg>
              <rect x="1.5" y="1.5" width="13" height="13" fill="#fff" stroke={INK} />
              <path d="M3 3.5h10M3 5.5h10M3 7.5h10M3 9.5h10M3 11.5h10" stroke={INK} strokeDasharray="2 1" />
            </Svg>
            Správce dodatků
          </button>
          <div className="mt-1.5 grid h-[42px] grid-cols-2 gap-[5px]">
            <button type="button" aria-label="Tisk" className={`${BTN} justify-center`}>
              <PrinterIcon>
                <path d="M7 18.5h10M7 20.5h3M11 20.5h6M7 22.5h10M7 24.5h6M14 24.5h3M7 26.5h8" stroke="#000" />
              </PrinterIcon>
            </button>
            <button type="button" aria-label="Tisk obrázku" className={`${BTN} justify-center`}>
              <PrinterIcon>
                <path d="M9 18.500H6.500v8H10M9 18.500h7.500v8zM11 21.500h5M14 24.500h2" stroke="#f01414" />
              </PrinterIcon>
            </button>
          </div>
          <button type="button" className={`${BTN} mt-[3px] h-[22px] gap-0.5 pl-[3px] whitespace-nowrap`}>
            <Svg>
              <rect x="0.5" y="0.5" width="8" height="10" fill="#fff" stroke="#6e6e6e" />
              <path d="M2.5 8.5V6h1V3h2v3h1v2.5z" stroke={INK} />
              <path d="M10 3.5h2.5V8M10.5 6.5l2 2 2-2" stroke="#009600" />
              <rect x="9.5" y="10.5" width="6" height="5" fill="#fff" stroke={INK} />
              <path d="M9 12.5h7" stroke={INK} />
            </Svg>
            Kopírovat pohled
          </button>
        </div>
      </div>
    </aside>
  );
}

export default function App() {
  return (
    <div className="flex h-screen flex-col overflow-hidden bg-[#f0f0f0] font-['Open_Sans','Noto_Sans',sans-serif] text-[12px] text-black">
      <TitleBar />
      <MenuBar />
      <Toolbar />
      <div className="flex min-h-0 grow">
        <div className="flex min-w-0 grow flex-col">
          <div className="flex min-h-0 flex-1">
            <ViewBar />
            <main className="min-w-0 grow border border-[#0078c8] bg-white">
              <Drawing />
            </main>
          </div>
          <BottomPanel />
          <footer className="flex h-[26px] shrink-0 pt-0.5 pb-0.5">
            <div className="w-[161px] border-r border-[#a8a8a8]" />
          </footer>
        </div>
        <div className="relative flex">
          <RightPanel />
          <span className="absolute right-0.5 bottom-0.5">
            <Svg w={8} h={8}>
              <path d="M6 0h2v2H6zM3 3h2v2H3zM6 3h2v2H6zM0 6h2v2H0zM3 6h2v2H3zM6 6h2v2H6z" fill="#b0b0b0" />
            </Svg>
          </span>
        </div>
      </div>
    </div>
  );
}
